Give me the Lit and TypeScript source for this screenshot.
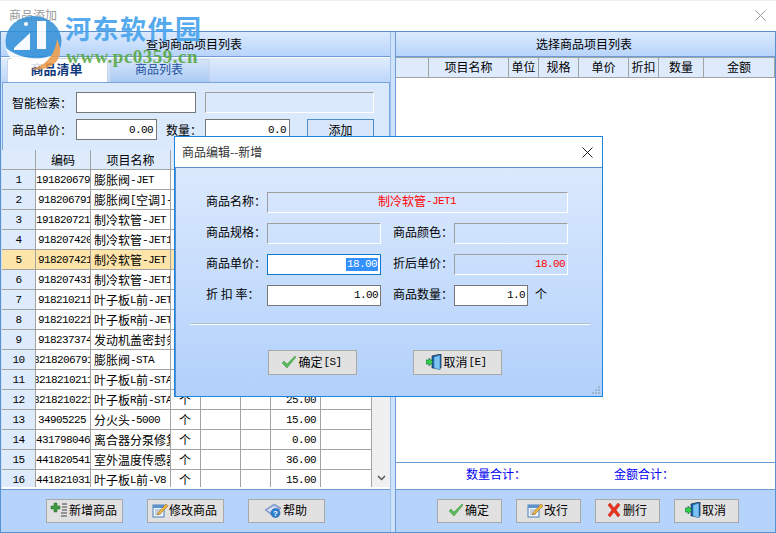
import { LitElement, html, css, svg } from "lit";
import { customElement } from "lit/decorators.js";

const t = (s: string) =>
  s.split(/([\x20-\x7e]+)/).map((p, i) => (i % 2 ? html`<span class="l">${p}</span>` : p));

type Row = { n: string; code: string; k: string; name: string; price: string; sel?: boolean };
const ROWS: Row[] = [
  { n: "1", code: "191820679", k: "a", name: "膨胀阀-JET", price: "" },
  { n: "2", code: "918206791", k: "b", name: "膨胀阀[空调]-", price: "" },
  { n: "3", code: "191820721", k: "a", name: "制冷软管-JET", price: "" },
  { n: "4", code: "918207420", k: "b", name: "制冷软管-JET1", price: "" },
  { n: "5", code: "918207421", k: "b", name: "制冷软管-JET", price: "", sel: true },
  { n: "6", code: "918207431", k: "b", name: "制冷软管-JET1", price: "" },
  { n: "7", code: "918210211", k: "b", name: "叶子板L前-JET", price: "" },
  { n: "8", code: "918210221", k: "b", name: "叶子板R前-JET", price: "" },
  { n: "9", code: "918237374", k: "b", name: "发动机盖密封条", price: "" },
  { n: "10", code: "8218206791", k: "c", name: "膨胀阀-STA", price: "" },
  { n: "11", code: "8218210211", k: "c", name: "叶子板L前-STA", price: "" },
  { n: "12", code: "8218210221", k: "c", name: "叶子板R前-STA", price: "25.00" },
  { n: "13", code: "34905225", k: "b", name: "分火头-5000", price: "15.00" },
  { n: "14", code: "431798046", k: "a", name: "离合器分泵修复", price: "0.00" },
  { n: "15", code: "441820541", k: "a", name: "室外温度传感器", price: "36.00" },
  { n: "16", code: "441821031", k: "a", name: "叶子板L前-V8", price: "15.00" },
];

const check = svg`<svg class="ic" viewBox="0 0 16 16"><path d="M1 9l2-2 3 3 8-8 1 1-9 11z" fill="#5cb85c" stroke="#3f9a3f" stroke-width=".5"/></svg>`;
const door = svg`<svg class="ic" viewBox="0 0 16 16"><path d="M6 2l9-2v14H6z" fill="#1c6fb8" stroke="#123" stroke-width=".7"/><path d="M8 3l6-2v15l-6-2z" fill="#7cc4f4" stroke="#1c5f9f" stroke-width=".5"/><path d="M0 6h3V4l4 4-4 4v-2H0z" fill="#35d04a" stroke="#164" stroke-width=".6"/></svg>`;
const edit = svg`<svg class="ic" viewBox="0 0 16 16"><rect x="1" y="3" width="11" height="12" fill="#eef4fb" stroke="#4a7fb8"/><rect x="1" y="3" width="11" height="3" fill="#5b93cf"/><path d="M3 8h6M3 10h5M3 12h6" stroke="#9ab"/><path d="M6 11l8-9 2 2-8 8-3 1z" fill="#f0b83c" stroke="#8a5a10" stroke-width=".5"/></svg>`;
const del = svg`<svg class="ic" viewBox="0 0 16 16"><path d="M2 3l2-2 4 5 4-5 2 2-4 5 4 5-2 2-4-5-4 5-2-2 4-5z" fill="#e8321e" stroke="#c02010" stroke-width=".5"/></svg>`;
const add = svg`<svg class="ic wide" viewBox="0 0 18 16"><path d="M4 1h3v3h3v3H7v3H4V7H1V4h3z" fill="#3f9a3f" stroke="#2a6a2a" stroke-width=".5"/><path d="M12 2h5M12 5h5M12 8h5M11 11h6M11 14h6" stroke="#444" stroke-width="1.2"/></svg>`;
const help = svg`<svg class="ic wide" viewBox="0 0 18 16"><path d="M1 8l9-6 7 4-8 8z" fill="#8fa9d8" stroke="#5f78b0" stroke-width=".6"/><path d="M3 8l7-4 4 2-6 5z" fill="#d5def2"/><circle cx="11.5" cy="11" r="4.5" fill="#2c7fd0" stroke="#16518f" stroke-width=".5"/><text x="11.5" y="14" font-size="8" font-family="Liberation Sans" font-weight="700" fill="#fff" text-anchor="middle">?</text></svg>`;

@customElement("app-root")
export class AppRoot extends LitElement {
  static styles = css`
    :host {
      display: block; width: 776px; height: 533px; position: relative; overflow: hidden;
      background: #fff; color: #000;
      font: 12px/14px "Noto Sans CJK SC", sans-serif;
    }
    .l { font: 11px/14px "Liberation Mono", monospace; letter-spacing: -.6px; }
    .win { height: 533px; display: grid; grid-template-rows: 30px 1fr; border-top: 1px solid #f0f0f0; box-sizing: border-box; }
    .titlebar { display: flex; align-items: center; justify-content: space-between; padding: 0 10px 2px 9px; color: #9a9a9a; }
    .main { display: grid; grid-template-columns: 393px 1fr; background: #cfe2fb; border: 1px solid #5b90cf; min-height: 0; }
    .col { display: flex; flex-direction: column; min-height: 0; min-width: 0; }
    .right { margin-left: 1px; border-left: 1px solid #6a9bd4; background: #fff; }
    .left { border-right: 1px solid #9cc0ec; width: 389px; }
    .phead { height: 24px; flex: none; display: flex; align-items: center; justify-content: center; padding-right: 3px;
      background: linear-gradient(#dceafd, #b7d4fb); border-bottom: 1px solid #6a9bd4; }
    .tabs { height: 25px; flex: none; display: flex; align-items: flex-end; box-sizing: border-box; padding-left: 6px; background: linear-gradient(#e0ecfd, #bcd7fb); border-top: 1px solid #fff; }
    .tab { height: 23px; display: flex; align-items: center; justify-content: center; border: 1px solid #c8d6e8; border-bottom: 0; border-radius: 3px 3px 0 0; box-sizing: border-box; padding-bottom: 4px; }
    .tab.on { background: #fff; color: #10397c; font-weight: 700; font-size: 13px; width: 101px; height: 24px; padding-right: 2px; }
    .tab.off { color: #1c4fa0; width: 100px; background: linear-gradient(#d5e5fa, #a9c9f3); margin-left: 2px; padding-right: 2px; }
    .form { flex: none; height: 68px; box-sizing: border-box; margin: 0 0 0 1px; border: 1px solid #7aa5dc; border-bottom: 0; background: #dbe9fd;
      display: flex; flex-direction: column; gap: 6px; padding: 9px 0 0 9px; }
    .frow { display: flex; align-items: center; height: 21px; }
    .lbl { width: 64px; flex: none; }
    .lbq { width: 39px; flex: none; margin-left: 9px; }
    .inp { box-sizing: border-box; height: 21px; flex: none; border: 1px solid #777; background: #fff; padding: 0 3px; display: flex; align-items: center; justify-content: flex-end; }
    .inp.ro { border: 1px solid; border-color: #9f9f9f #fff #fff #9f9f9f; background: transparent; }
    .w120 { width: 120px; } .w169 { width: 169px; margin-left: 9px; } .w81 { width: 81px; } .w85 { width: 85px; }
    .addbtn { flex: none; width: 67px; height: 24px; margin: 2px 0 0 17px; padding-bottom: 2px; display: flex; align-items: center; justify-content: center; background: #d7e6fb; border: 1px solid #4f8ccb; box-sizing: border-box; }
    .grid { flex: 1; min-height: 0; overflow: hidden; margin-left: 1px; background: #fff; display: grid; grid-template-columns: 370px 18px; }
    .rows { display: grid; grid-template-columns: 34px 55px 80px 30px 40px 30px 50px 51px; grid-auto-rows: 20px; overflow: hidden; height: 337px; align-content: start; }
    .c { box-sizing: border-box; border-right: 1px solid #a3a3a3; border-bottom: 1px solid #a3a3a3; display: flex; align-items: center; overflow: hidden; white-space: nowrap; background: #fff; }
    .h { background: #deebfd; justify-content: center; }
    .rtable .h { padding-bottom: 2px; }
    .rn { background: #deebfd; justify-content: center; }
    .code.a { padding-left: 0; } .code.b { padding-left: 2px; } .code.c2 { justify-content: center; }
    .name { padding-left: 3px; }
    .u { padding-left: 8px; }
    .pr { justify-content: flex-end; padding-right: 4px; }
    .c.sel { background: #fde5a9; }
    .scroll { background: #f0f0f0; display: flex; align-items: flex-end; justify-content: center; padding-bottom: 6px; box-sizing: border-box; height: 337px; }
    .foot { flex: none; height: 43px; border-top: 1px solid #6a9bd4; background: #b5d3fb; display: flex; align-items: center; box-sizing: border-box; padding-bottom: 1px; }
    .foot.lf { padding-left: 45px; gap: 24px; }
    .foot.rf { padding-left: 41px; gap: 14px; }
    .btn { box-sizing: border-box; height: 24px; display: flex; align-items: center; justify-content: center; gap: 1px; border: 1px solid #a8a8a8; background: #e1e1e1; white-space: nowrap; padding: 0 2px 2px 0; }
    .ic { width: 16px; height: 16px; flex: none; }
    .ic.wide { width: 18px; }
    .b77 { width: 77px; } .b65 { width: 65px; }
    .rtable { flex: none; display: grid; grid-template-columns: 33px 80px 30px 40px 50px 30px 45px 71px; height: 21px; border-top: 1px solid #a3a3a3; box-sizing: border-box; }
    .blank { flex: 1; background: #fff; }
    .sum { flex: none; height: 27px; border-top: 1px solid #6a9bd4; display: flex; align-items: center; color: #0000f0; padding-left: 70px; gap: 88px; padding-bottom: 4px; box-sizing: border-box; }
    .logo { position: absolute; left: 5px; top: 15px; width: 57px; height: 55px; opacity: .85; }
    .wm1 { position: absolute; left: 65px; top: 12px; font: 700 26px/32px "Noto Sans CJK SC", sans-serif; color: #4ea6ee; white-space: nowrap; opacity: .95; letter-spacing: 1.5px; }
    .wm2 { position: absolute; left: 66px; top: 47px; font: 700 19px/20px "Liberation Serif", serif; color: #5aa845; white-space: nowrap; letter-spacing: .5px; opacity: .9; }
    .dlg { position: absolute; left: 174px; top: 136px; width: 429px; height: 261px; box-sizing: border-box; border: 1px solid #1b84dc; background: #fff; display: flex; flex-direction: column; }
    .dtitle { height: 30px; flex: none; display: flex; align-items: center; justify-content: space-between; padding: 0 9px 0 7px; color: #333; box-sizing: border-box; }
    .dbody { flex: 1; position: relative; border-top: 1px solid #5b90cf; border-left: 1px solid #5b90cf; background: linear-gradient(#dbe9fd, #b1d0fb); display: flex; flex-direction: column; padding: 23px 0 0 30px; }
    .dform { display: grid; grid-template-columns: 61px 114px 12px 61px 114px 1fr; grid-template-rows: 22px 22px 22px 22px; row-gap: 9px; align-items: center; }
    .dlab { padding-bottom: 2px; }
    .dform .inp { padding-right: 2px; }
    .span { grid-column: 2 / 6; width: 301px; justify-content: center !important; color: #f00; padding-bottom: 2px; padding-right: 4px !important; }
    .red { color: #f00; }
    .inp.focus { border: 1px solid #0a78d0; }
    .hl { background: #3390ff; color: #fff; padding: 0 1px; line-height: 13px; }
    .short { width: 74px; }
    .qrow { display: flex; align-items: center; gap: 7px; grid-column: 5 / 7; }
    .hr { margin: 17px 12px 0 -16px; height: 1px; background: #a9bfd9; border-bottom: 1px solid #fff; flex: none; }
    .dbtns { display: flex; gap: 56px; margin: 25px 0 0 62px; }
    .b89 { width: 89px; height: 25px; }
    .grip { position: absolute; right: 1px; bottom: 1px; width: 9px; height: 9px; }
    .x { width: 11px; height: 11px; display: block; }
  `;

  render() {
    const r = (x: Row) => {
      const s = x.sel ? "sel" : "";
      const k = x.k === "c" ? "c2" : x.k;
      return html`
        <div class="c rn ${s}"><span class="l">${x.n}</span></div>
        <div class="c code ${k} ${s}"><span class="l">${x.code}</span></div>
        <div class="c name ${s}">${t(x.name)}</div>
        <div class="c u ${s}">个</div>
        <div class="c ${s}"></div>
        <div class="c ${s}"></div>
        <div class="c pr ${s}"><span class="l">${x.price}</span></div>
        <div class="c ${s}"></div>`;
    };
    const grip = svg`<svg class="grip" viewBox="0 0 9 9" fill="#9db4cf"><rect x="6" y="0" width="2" height="2"/><rect x="3" y="3" width="2" height="2"/><rect x="6" y="3" width="2" height="2"/><rect x="0" y="6" width="2" height="2"/><rect x="3" y="6" width="2" height="2"/><rect x="6" y="6" width="2" height="2"/></svg>`;
    return html`
      <div class="win">
        <div class="titlebar">
          <span>商品添加</span>
          <svg class="x" viewBox="0 0 11 11"><path d="M.5.5l10 10M10.5.5l-10 10" stroke="#9a9a9a" fill="none"/></svg>
        </div>
        <div class="main">
          <div class="col left">
            <div class="phead">查询商品项目列表</div>
            <div class="tabs">
              <div class="tab on">商品清单</div>
              <div class="tab off">商品列表</div>
            </div>
            <div class="form">
              <div class="frow">
                <span class="lbl">智能检索：</span>
                <div class="inp w120"></div>
                <div class="inp ro w169"></div>
              </div>
              <div class="frow">
                <span class="lbl">商品单价：</span>
                <div class="inp w81"><span class="l">0.00</span></div>
                <span class="lbq">数量：</span>
                <div class="inp w85"><span class="l">0.0</span></div>
                <div class="addbtn">添加</div>
              </div>
            </div>
            <div class="grid">
              <div class="rows">
                <div class="c h"></div><div class="c h">编码</div><div class="c h">项目名称</div><div class="c h"></div><div class="c h"></div><div class="c h"></div><div class="c h"></div><div class="c h"></div>
                ${ROWS.map(r)}
              </div>
              <div class="scroll">
                <svg width="9" height="6" viewBox="0 0 9 6"><path d="M1 1l3.5 3.5L8 1" stroke="#555" stroke-width="1.5" fill="none"/></svg>
              </div>
            </div>
            <div class="foot lf">
              <div class="btn b77">${add}新增商品</div>
              <div class="btn b77">${edit}修改商品</div>
              <div class="btn b77">${help}帮助</div>
            </div>
          </div>
          <div class="col right">
            <div class="phead">选择商品项目列表</div>
            <div class="rtable">
              <div class="c h"></div><div class="c h">项目名称</div><div class="c h">单位</div><div class="c h">规格</div><div class="c h">单价</div><div class="c h">折扣</div><div class="c h">数量</div><div class="c h">金额</div>
            </div>
            <div class="blank"></div>
            <div class="sum"><span>数量合计：</span><span>金额合计：</span></div>
            <div class="foot rf">
              <div class="btn b65">${check}确定</div>
              <div class="btn b65">${edit}改行</div>
              <div class="btn b65">${del}删行</div>
              <div class="btn b65">${door}取消</div>
            </div>
          </div>
        </div>
      </div>

      <svg class="logo" viewBox="0 0 57 55">
        <ellipse cx="28.5" cy="26" rx="28" ry="25" fill="#2f8fd8"/>
        <path d="M1 33C4 48 18 53 30 52c10-1 17-6 22-14-6 4-16 6-26 5C16 42 7 38 1 33z" fill="#fff"/>
        <path d="M52 24c6 12 3 22-6 27-7 4-15 4-20 3 12-2 24-12 26-30z" fill="#ec9a45"/>
        <path d="M9 33L25 18v17H9z" fill="#fff"/>
        <path d="M32 6h9v28h-9z" fill="#fff"/>
        <circle cx="21" cy="9" r="2" fill="#fff"/>
      </svg>
      <div class="wm1">河东软件园</div>
      <div class="wm2">www.pc0359.cn</div>

      <div class="dlg">
        <div class="dtitle">
          <span>商品编辑--新增</span>
          <svg class="x" viewBox="0 0 11 11"><path d="M.5.5l10 10M10.5.5l-10 10" stroke="#222" fill="none"/></svg>
        </div>
        <div class="dbody">
          <div class="dform">
            <span class="dlab">商品名称：</span>
            <div class="inp ro span">${t("制冷软管-JET1")}</div>
            <span></span>
            <span class="dlab">商品规格：</span>
            <div class="inp ro"></div><span></span>
            <span class="dlab">商品颜色：</span>
            <div class="inp ro"></div><span></span>
            <span class="dlab">商品单价：</span>
            <div class="inp focus"><span class="l hl">18.00</span></div><span></span>
            <span class="dlab">折后单价：</span>
            <div class="inp ro red"><span class="l">18.00</span></div><span></span>
            <span class="dlab">折&nbsp;扣&nbsp;率：</span>
            <div class="inp"><span class="l">1.00</span></div><span></span>
            <span class="dlab">商品数量：</span>
            <div class="qrow"><div class="inp short"><span class="l">1.0</span></div><span class="dlab">个</span></div>
          </div>
          <div class="hr"></div>
          <div class="dbtns">
            <div class="btn b89">${check}确定${t("[S]")}</div>
            <div class="btn b89">${door}取消${t("[E]")}</div>
          </div>
          ${grip}
        </div>
      </div>
    `;
  }
}
